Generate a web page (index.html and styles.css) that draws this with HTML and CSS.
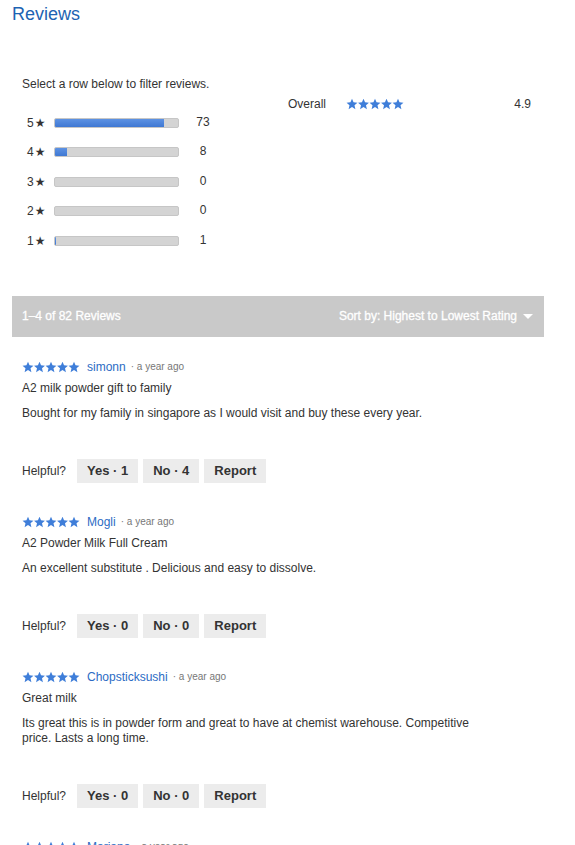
FILE: index.html
```html
<!DOCTYPE html>
<html>
<head>
<meta charset="utf-8">
<link rel="stylesheet" href="styles.css">
</head>
<body>
<svg width="0" height="0" class="defs">
  <defs>
    <symbol id="star" viewBox="0 0 24 24">
      <path d="M12 1.5l3.1 7.2 7.8.7-5.9 5.2 1.8 7.7L12 18.2l-6.8 4.1 1.8-7.7-5.9-5.2 7.8-.7z"/>
    </symbol>
    <symbol id="stars5" viewBox="0 0 58 12">
      <use href="#star" x="0" y="0" width="12" height="12"/>
      <use href="#star" x="11.5" y="0" width="12" height="12"/>
      <use href="#star" x="23" y="0" width="12" height="12"/>
      <use href="#star" x="34.5" y="0" width="12" height="12"/>
      <use href="#star" x="46" y="0" width="12" height="12"/>
    </symbol>
  </defs>
</svg>

<h1 class="title">Reviews</h1>

<section class="summary">
  <div class="hist">
    <p class="hint">Select a row below to filter reviews.</p>
    <div class="hrow"><span class="hlabel">5★</span><span class="bar"><span class="fill" style="width:89%"></span></span><span class="count">73</span></div>
    <div class="hrow"><span class="hlabel">4★</span><span class="bar"><span class="fill" style="width:10%"></span></span><span class="count">8</span></div>
    <div class="hrow"><span class="hlabel">3★</span><span class="bar"><span class="fill" style="width:0%"></span></span><span class="count">0</span></div>
    <div class="hrow"><span class="hlabel">2★</span><span class="bar"><span class="fill" style="width:0%"></span></span><span class="count">0</span></div>
    <div class="hrow"><span class="hlabel">1★</span><span class="bar"><span class="fill" style="width:1.2%"></span></span><span class="count">1</span></div>
  </div>
  <div class="overall">
    <span class="olabel">Overall</span>
    <svg class="stars"><use href="#stars5"/></svg>
    <span class="ovalue">4.9</span>
  </div>
</section>

<div class="toolbar">
  <span class="tcount">1–4 of 82 Reviews</span>
  <span class="sort">Sort by: Highest to Lowest Rating <span class="caret"></span></span>
</div>

<section class="reviews">
  <article class="review">
    <div class="rhead"><svg class="stars"><use href="#stars5"/></svg><span class="author">simonn</span><span class="date">· a year ago</span></div>
    <h3 class="rtitle">A2 milk powder gift to family</h3>
    <p class="rbody">Bought for my family in singapore as I would visit and buy these every year.</p>
    <div class="helpful"><span class="hq">Helpful?</span><button class="btn">Yes · 1</button><button class="btn">No · 4</button><button class="btn">Report</button></div>
  </article>
  <article class="review">
    <div class="rhead"><svg class="stars"><use href="#stars5"/></svg><span class="author">Mogli</span><span class="date">· a year ago</span></div>
    <h3 class="rtitle">A2 Powder Milk Full Cream</h3>
    <p class="rbody">An excellent substitute . Delicious and easy to dissolve.</p>
    <div class="helpful"><span class="hq">Helpful?</span><button class="btn">Yes · 0</button><button class="btn">No · 0</button><button class="btn">Report</button></div>
  </article>
  <article class="review">
    <div class="rhead"><svg class="stars"><use href="#stars5"/></svg><span class="author">Chopsticksushi</span><span class="date">· a year ago</span></div>
    <h3 class="rtitle">Great milk</h3>
    <p class="rbody">Its great this is in powder form and great to have at chemist warehouse. Competitive price. Lasts a long time.</p>
    <div class="helpful"><span class="hq">Helpful?</span><button class="btn">Yes · 0</button><button class="btn">No · 0</button><button class="btn">Report</button></div>
  </article>
  <article class="review">
    <div class="rhead"><svg class="stars"><use href="#stars5"/></svg><span class="author">Mariana</span><span class="date">· a year ago</span></div>
    <h3 class="rtitle">Good milk</h3>
    <p class="rbody">Great product.</p>
  </article>
</section>
</body>
</html>
```

FILE: styles.css
```css
* { box-sizing: border-box; }
html, body { margin: 0; padding: 0; background: #fff; }
body {
  font-family: "Liberation Sans", Arial, sans-serif;
  color: #333;
  font-size: 12px;
}
.defs { position: absolute; width: 0; height: 0; overflow: hidden; }

.title {
  margin: 0;
  padding: 3px 0 0 12px;
  font-size: 18px;
  line-height: 22px;
  font-weight: normal;
  color: #1d63b3;
}

.summary {
  display: flex;
  padding: 0 0 0 22px;
  margin-top: 51px;
}
.hist { width: 266px; }
.hint { margin: 0 0 16px; line-height: 16px; font-size: 12px; }
.hrow {
  display: flex;
  align-items: center;
  height: 29.5px;
}
.hlabel {
  width: 32px;
  padding-left: 5px;
  font-size: 12px;
  font-family: "Liberation Sans", "DejaVu Sans", sans-serif;
  color: #333;
  white-space: nowrap;
  letter-spacing: 1px;
}
.bar {
  position: relative;
  display: block;
  width: 125px;
  height: 10px;
  background: #d4d4d4;
  border: 1px solid #c6c6c6;
  border-radius: 2px;
  overflow: hidden;
}
.fill {
  display: block;
  height: 100%;
  background: linear-gradient(#5d92e3, #3f78d3);
}
.count {
  width: 28px;
  margin-left: 10px;
  text-align: center;
  font-size: 12px;
  margin-top: -2px;
}

.overall {
  display: flex;
  align-items: center;
  width: 243px;
  height: 16px;
  margin-top: 20px;
}
.olabel { width: 58px; font-size: 12px; }
.stars { width: 58px; height: 12px; fill: #3f7ed9; flex: none; }
.ovalue { margin-left: auto; font-size: 12px; }

.toolbar {
  display: flex;
  align-items: center;
  justify-content: space-between;
  margin: 40px 0 0 12px;
  width: 532px;
  height: 41px;
  padding: 0 11px 0 10px;
  background: #c9c9c9;
  color: #fff;
  font-weight: normal;
  font-size: 12px;
  -webkit-text-stroke: 0.3px #fff;
}
.sort { display: flex; align-items: center; }
.caret {
  display: inline-block;
  width: 0; height: 0;
  margin-left: 6px;
  border-left: 5px solid transparent;
  border-right: 5px solid transparent;
  border-top: 5px solid #fff;
}

.reviews { padding: 22px 0 0 22px; }
.review { margin-bottom: 31px; }
.rhead { display: flex; align-items: center; height: 16px; }
.author { margin-left: 7px; color: #2c6bc4; font-size: 12px; }
.date { margin-left: 5px; color: #777; font-size: 10px; }
.rtitle {
  margin: 5px 0 0;
  font-size: 12px;
  line-height: 16px;
  font-weight: normal;
  color: #333;
}
.rbody {
  margin: 10.5px 0 0;
  width: 470px;
  font-size: 12px;
  line-height: 15px;
}
.helpful {
  display: flex;
  align-items: center;
  margin-top: 37.5px;
}
.hq { font-size: 12px; margin-right: 11px; }
.btn {
  height: 24px;
  margin-right: 5px;
  padding: 0 10px;
  border: none;
  background: #ececec;
  color: #333;
  font-family: "Liberation Sans", Arial, sans-serif;
  font-size: 13px;
  font-weight: bold;
  cursor: pointer;
}
```
